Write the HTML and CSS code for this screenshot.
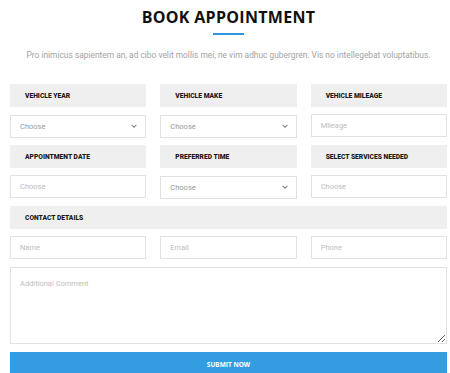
FILE: index.html
```html
<!DOCTYPE html>
<html lang="en">
  <head>
    <meta charset="UTF-8" />
    <meta name="viewport" content="width=device-width, initial-scale=1.0" />
    <title>Book Appointment</title>
    <link rel="stylesheet" href="styles.css">
  </head>

  <body>
    <div class="booking">
      <!-- Heading -->
      <header class="booking-head">
        <h1>BOOK APPOINTMENT</h1>
        <span class="underline"></span>
        <p>Pro inimicus sapientem an, ad cibo velit mollis mei, ne vim adhuc gubergren. Vis no intellegebat voluptatibus.</p>
      </header>

      <!-- Form -->
      <form class="booking-form">
        <div class="field-label">Vehicle Year</div>
        <div class="field-label">Vehicle Make</div>
        <div class="field-label">Vehicle Mileage</div>

        <div class="select-wrap">
          <select><option>Choose</option></select>
          <svg class="chevron" viewBox="0 0 10 6" width="6" height="4"><path d="M1 1l4 4 4-4" fill="none" stroke="#888" stroke-width="1.8"/></svg>
        </div>
        <div class="select-wrap">
          <select><option>Choose</option></select>
          <svg class="chevron" viewBox="0 0 10 6" width="6" height="4"><path d="M1 1l4 4 4-4" fill="none" stroke="#888" stroke-width="1.8"/></svg>
        </div>
        <input type="text" placeholder="Mileage" />

        <div class="field-label">Appointment Date</div>
        <div class="field-label">Preferred Time</div>
        <div class="field-label">Select Services Needed</div>

        <input type="text" placeholder="Choose" />
        <div class="select-wrap">
          <select><option>Choose</option></select>
          <svg class="chevron" viewBox="0 0 10 6" width="6" height="4"><path d="M1 1l4 4 4-4" fill="none" stroke="#888" stroke-width="1.8"/></svg>
        </div>
        <input type="text" placeholder="Choose" />

        <div class="field-label wide">Contact Details</div>

        <input type="text" placeholder="Name" />
        <input type="email" placeholder="Email" />
        <input type="text" placeholder="Phone" />

        <textarea class="wide" placeholder="Additional Comment"></textarea>

        <button type="submit" class="wide">SUBMIT NOW</button>
      </form>
    </div>
  </body>
</html>
```

FILE: styles.css
```css
* {
  margin: 0;
  padding: 0;
  box-sizing: border-box;
}

body {
  font-family: Roboto, "Liberation Sans", sans-serif;
  background: #fff;
}

.booking {
  padding: 6px 3px 0 10px;
}

.booking-head {
  text-align: center;
}

.booking-head h1 {
  font-family: "Open Sans", sans-serif;
  font-size: 16px;
  line-height: 22px;
  font-weight: 700;
  color: #111;
  letter-spacing: 0.3px;
}

.booking-head .underline {
  display: block;
  width: 31px;
  height: 2px;
  background: #2e95e2;
  margin: 5px auto 0;
}

.booking-head p {
  font-size: 8.4px;
  color: #a3a3a3;
  margin-top: 14px;
  line-height: 12px;
}

.booking-form {
  display: grid;
  grid-template-columns: repeat(3, 1fr);
  column-gap: 14px;
  row-gap: 7px;
  margin-top: 23px;
}

.wide {
  grid-column: 1 / -1;
}

.field-label {
  height: 23px;
  background: #f0efef;
  padding-left: 15px;
  display: flex;
  align-items: center;
  font-size: 6.7px;
  font-weight: 900;
  text-transform: uppercase;
  color: #1a1a1a;
}

.select-wrap {
  position: relative;
}

.chevron {
  position: absolute;
  right: 9px;
  top: 10px;
  pointer-events: none;
}

.booking-form input,
.booking-form select,
.booking-form textarea {
  width: 100%;
  height: 23px;
  border: 1px solid #e2e2e2;
  background: #fff;
  padding: 0 9px;
  font-family: Roboto, sans-serif;
  font-size: 7.5px;
  color: #9a9a9a;
  outline: none;
  appearance: none;
  border-radius: 0;
}

.booking-form input::placeholder,
.booking-form textarea::placeholder {
  color: #bdbdbd;
}

.booking-form textarea {
  height: 77px;
  padding-top: 11px;
  margin-top: 1px;
}

.booking-form button {
  height: 24px;
  margin-top: 1px;
  background: #339de1;
  border: none;
  color: #fff;
  font-family: "Open Sans", sans-serif;
  font-size: 6.5px;
  font-weight: 700;
  cursor: pointer;
}
```
